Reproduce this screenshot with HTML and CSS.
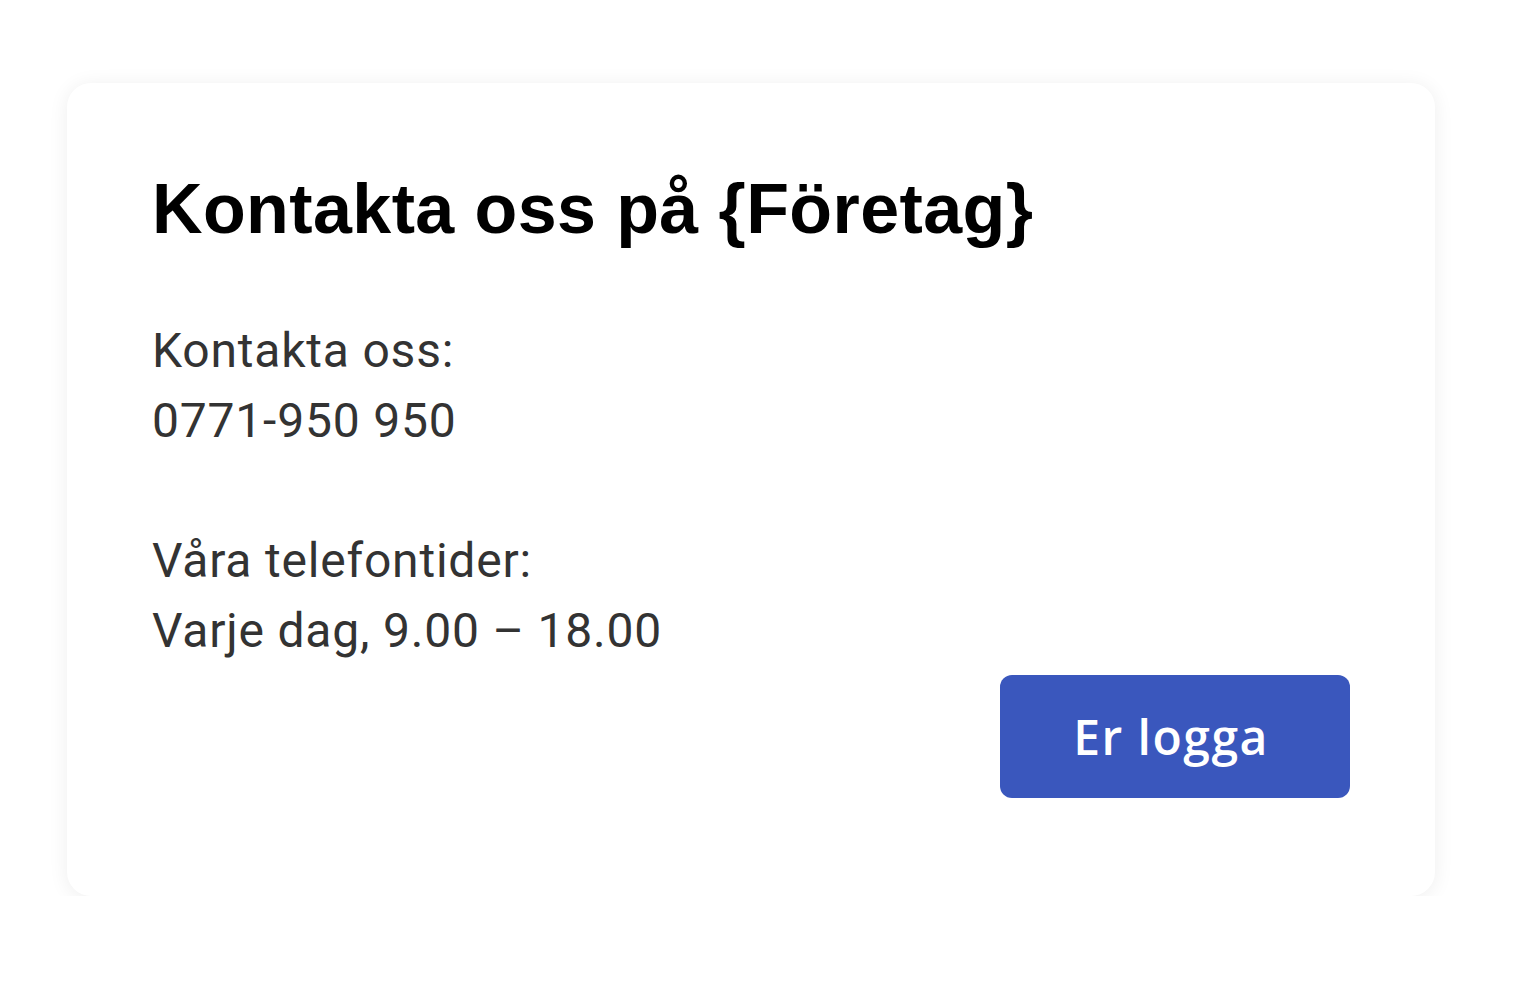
FILE: index.html
```html
<!DOCTYPE html>
<html lang="sv">
<head>
<meta charset="utf-8">
<title>Kontakta oss</title>
<link rel="stylesheet" href="styles.css">
</head>
<body>
<div class="card">
  <h1 class="title">Kontakta oss på {Företag}</h1>
  <p class="info">Kontakta oss:<br>0771-950 950<br><br>Våra telefontider:<br>Varje dag, 9.00 – 18.00</p>
  <button class="btn">Er logga</button>
</div>
</body>
</html>
```
FILE: styles.css
```css
html, body {
  margin: 0;
  padding: 0;
  background: #ffffff;
}
body {
  padding: 83px 0 0 67px;
}
.card {
  box-sizing: border-box;
  width: 1368px;
  height: 813px;
  background: #ffffff;
  border-radius: 24px;
  box-shadow: 0 2px 20px rgba(0, 0, 0, 0.07);
  padding: 86px 85px 0 85px;
  display: flex;
  flex-direction: column;
}
.title {
  margin: 0;
  font-family: "Liberation Sans", Arial, sans-serif;
  font-weight: 700;
  font-size: 70px;
  line-height: 80px;
  letter-spacing: 0.4px;
  color: #000000;
}
.info {
  margin: 67px 0 0 0;
  font-family: Roboto, "Liberation Sans", sans-serif;
  font-size: 48px;
  line-height: 70px;
  letter-spacing: 0.8px;
  color: #333333;
}
.btn {
  align-self: flex-end;
  margin-top: 9px;
  width: 350px;
  height: 123px;
  border: none;
  border-radius: 12px;
  background: #3a57bd;
  color: #ffffff;
  font-family: "Open Sans", sans-serif;
  font-weight: 600;
  font-size: 48px;
  letter-spacing: 1.5px;
  padding: 0 8px 0 0;
}
```
